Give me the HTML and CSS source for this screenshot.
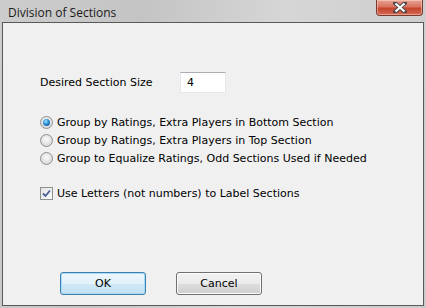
FILE: index.html
```html
<!DOCTYPE html>
<html lang="en">
<head>
    <meta charset="UTF-8">
    <title>Division of Sections</title>
    <link rel="stylesheet" href="styles.css">
</head>
<body>
    <div class="window">
        <div class="titlebar">
            <span class="title">Division of Sections</span>
            <div class="close-btn">
                <svg width="14" height="11" viewBox="0 0 14 11">
                    <path d="M2 1 L12 10 M12 1 L2 10" stroke="#4a4a4a" stroke-width="4" stroke-linecap="square"/>
                    <path d="M2.5 1.5 L11.5 9.5 M11.5 1.5 L2.5 9.5" stroke="#fff" stroke-width="2.2"/>
                </svg>
            </div>
        </div>

        <div class="frame">
            <div class="size-row">
                <span class="label">Desired Section Size</span>
                <div class="textbox">4</div>
            </div>

            <div class="options">
                <div class="option">
                    <span class="radio checked"></span>
                    <span>Group by Ratings, Extra Players in Bottom Section</span>
                </div>
                <div class="option">
                    <span class="radio"></span>
                    <span>Group by Ratings, Extra Players in Top Section</span>
                </div>
                <div class="option">
                    <span class="radio"></span>
                    <span>Group to Equalize Ratings, Odd Sections Used if Needed</span>
                </div>
            </div>

            <div class="option check-row">
                <span class="checkbox">
                    <svg width="9" height="9" viewBox="0 0 9 9">
                        <path d="M1 4.5 L3.5 7 L8 1.5" fill="none" stroke="#4a5f97" stroke-width="1.8"/>
                    </svg>
                </span>
                <span>Use Letters (not numbers) to Label Sections</span>
            </div>

            <div class="buttons">
                <button class="btn default">OK</button>
                <button class="btn">Cancel</button>
            </div>
        </div>
    </div>
</body>
</html>
```

FILE: styles.css
```css
* {
    margin: 0;
    padding: 0;
    box-sizing: border-box;
}

body {
    width: 426px;
    height: 308px;
    overflow: hidden;
    font-family: 'DejaVu Sans', Tahoma, sans-serif;
    font-size: 11px;
    color: #000;
}

.window {
    width: 426px;
    height: 308px;
    background: linear-gradient(100deg, #cdcdcd 0%, #c4c4c4 30%, #d6d6d6 60%, #cbcbcb 100%);
    padding: 0 2px 2px 2px;
    display: flex;
    flex-direction: column;
}

.titlebar {
    height: 22px;
    display: flex;
    justify-content: space-between;
    align-items: flex-start;
}

.title {
    padding: 4px 0 0 6px;
    font-family: 'Open Sans', 'DejaVu Sans', sans-serif;
    font-size: 12px;
    color: #1a1a1a;
}

.close-btn {
    width: 47px;
    height: 16px;
    margin-right: 1px;
    border: 1px solid #7a3a30;
    border-top: none;
    border-radius: 0 0 4px 4px;
    background: linear-gradient(#e8a293 0%, #d8735f 45%, #c5452c 55%, #d46a55 100%);
    box-shadow: inset 0 0 0 1px rgba(255, 220, 210, 0.5);
    display: flex;
    align-items: center;
    justify-content: center;
}

.frame {
    flex: 1;
    background: #f0f0f0;
    border: 1px solid #5a5a5a;
    padding: 49px 0 0 37px;
    display: flex;
    flex-direction: column;
}

.size-row {
    display: flex;
    align-items: center;
    height: 21px;
}

.label {
    width: 140px;
}

.textbox {
    width: 46px;
    height: 21px;
    background: #fff;
    border: 1px solid #e3e9ef;
    border-top-color: #abadb3;
    padding: 3px 0 0 6px;
}

.options {
    margin-top: 23px;
    display: flex;
    flex-direction: column;
    gap: 5px;
}

.option {
    display: flex;
    align-items: center;
    gap: 4px;
    height: 13px;
}

.radio {
    width: 13px;
    height: 13px;
    border-radius: 50%;
    border: 1px solid #8e8f8f;
    background: radial-gradient(circle at 50% 40%, #fafafa 0%, #e0e0e0 60%, #cfcfcf 100%);
    position: relative;
}

.radio.checked::after {
    content: "";
    position: absolute;
    left: 2px;
    top: 2px;
    width: 7px;
    height: 7px;
    border-radius: 50%;
    background: radial-gradient(circle at 40% 35%, #9fe3ff 0%, #2a8dd4 45%, #0d4a8a 100%);
}

.check-row {
    margin-top: 22px;
}

.checkbox {
    width: 13px;
    height: 13px;
    border: 1px solid #8e8f8f;
    background: linear-gradient(135deg, #e4e4e4, #fafafa);
    display: flex;
    align-items: center;
    justify-content: center;
}

.buttons {
    margin-top: 72px;
    margin-left: 20px;
    display: flex;
    gap: 30px;
}

.btn {
    width: 86px;
    height: 23px;
    font-family: 'DejaVu Sans', Tahoma, sans-serif;
    font-size: 11px;
    color: #000;
    border: 1px solid #707070;
    border-radius: 3px;
    background: linear-gradient(#f2f2f2 0%, #ebebeb 50%, #dddddd 51%, #cfcfcf 100%);
    box-shadow: inset 0 0 0 1px #fcfcfc;
}

.btn.default {
    border-color: #3c7fb1;
    background: linear-gradient(#eef7fc 0%, #e2f1fa 50%, #d0e9f7 51%, #c2e1f3 100%);
    box-shadow: inset 0 0 0 1px #a8dcf5;
}
```
